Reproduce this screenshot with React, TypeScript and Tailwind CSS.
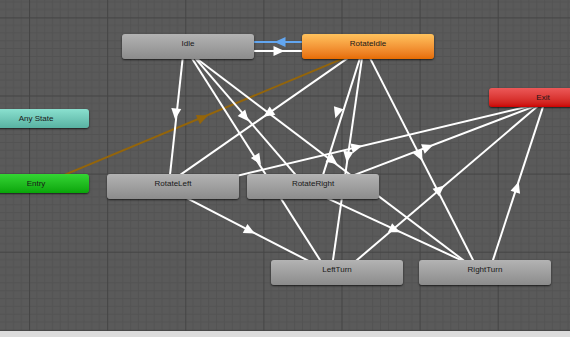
import React from "react";

type Node = {
  label: string;
  x: number;
  y: number;
  w: number;
  h: number;
  tone: string;
  text?: string;
};

// node boxes on the canvas (left / top in px)
const NODES: Node[] = [
  { label: "Idle", x: 122, y: 34, w: 132, h: 25, tone: "bg-gradient-to-b from-[#b3b3b3] to-[#8c8c8c]", text: "pb-[5px]" },
  { label: "RotateIdle", x: 302, y: 34, w: 132, h: 25, tone: "bg-gradient-to-b from-[#ffc25c] to-[#e66c00]", text: "pb-[5px]" },
  { label: "Any State", x: -17, y: 109, w: 106, h: 19, tone: "bg-gradient-to-b from-[#8ae0cf] to-[#58b2a2]" },
  { label: "Entry", x: -17, y: 174, w: 106, h: 19, tone: "bg-gradient-to-b from-[#33d633] to-[#08a508]" },
  { label: "Exit", x: 489, y: 88, w: 108, h: 19, tone: "bg-gradient-to-b from-[#ec5858] to-[#cb0000]" },
  { label: "RotateLeft", x: 107, y: 174, w: 132, h: 25, tone: "bg-gradient-to-b from-[#b3b3b3] to-[#8c8c8c]", text: "pb-[5px]" },
  { label: "RotateRight", x: 247, y: 174, w: 132, h: 25, tone: "bg-gradient-to-b from-[#b3b3b3] to-[#8c8c8c]", text: "pb-[5px]" },
  { label: "LeftTurn", x: 271, y: 260, w: 132, h: 25, tone: "bg-gradient-to-b from-[#b3b3b3] to-[#8c8c8c]", text: "pb-[5px]" },
  { label: "RightTurn", x: 419, y: 260, w: 132, h: 25, tone: "bg-gradient-to-b from-[#b3b3b3] to-[#8c8c8c]", text: "pb-[5px]" },
];

// visible segment x1, y1 -> x2, y2 (both ends get pushed under the nodes),
// arrow centred at ax, ay
type Edge = [number, number, number, number, number, number, string?];

const EDGES: Edge[] = [
  [254, 51, 302, 51, 279, 51],
  [302, 42, 254, 42, 280, 42, "#62a6f0"],
  [36, 186.8, 345, 57.7, 203, 117.5, "#94650a"],
  [182.7, 58, 170, 175, 175.7, 114],
  [191.7, 58, 320, 260, 258, 160],
  [195, 58, 295, 174, 245, 117],
  [196, 58, 463, 260, 333, 161],
  [348, 58, 180, 175, 268, 113.7],
  [360, 58, 323, 175, 337, 113],
  [362, 58, 333, 260, 347.5, 157],
  [370, 58, 473, 260, 420, 156],
  [186.7, 198, 306.7, 260, 250, 231],
  [238, 175.6, 527, 106.7, 357, 147],
  [330, 184.3, 530, 108, 428, 147],
  [326.7, 198, 463, 261, 395, 230],
  [357, 260, 537, 106.7, 440, 189],
  [493, 260, 543, 106.7, 517, 187],
];

function Arrow({ e }: { e: Edge }) {
  const [x1, y1, x2, y2, ax, ay, color] = e;
  const len = Math.hypot(x2 - x1, y2 - y1);
  const dx = (x2 - x1) / len;
  const dy = (y2 - y1) / len;
  const ext = 8;
  const L = 11;
  const W = 10;
  const tip = [ax + (dx * L) / 2, ay + (dy * L) / 2];
  const bx = ax - (dx * L) / 2;
  const by = ay - (dy * L) / 2;
  const pts = `${tip[0]},${tip[1]} ${bx - (dy * W) / 2},${by + (dx * W) / 2} ${bx + (dy * W) / 2},${by - (dx * W) / 2}`;
  const c = color ?? "#ffffff";
  return (
    <g>
      <line
        x1={x1 - dx * ext}
        y1={y1 - dy * ext}
        x2={x2 + dx * ext}
        y2={y2 + dy * ext}
        stroke={c}
        strokeWidth={2}
      />
      <polygon points={pts} fill={c} />
    </g>
  );
}

function Grid() {
  const minor = [];
  for (let i = 1; i < 10; i++) {
    minor.push(
      <g key={i}>
        <line x1={i * 7.81} y1={0} x2={i * 7.81} y2={78.1} stroke="#535353" strokeWidth={1} />
        <line x1={0} y1={i * 7.81} x2={78.1} y2={i * 7.81} stroke="#535353" strokeWidth={1} />
      </g>
    );
  }
  return (
    <>
      <defs>
        <pattern id="grid" x={29.1} y={17.4} width={78.1} height={78.1} patternUnits="userSpaceOnUse">
          {minor}
          <line x1={0.5} y1={0} x2={0.5} y2={78.1} stroke="#444444" strokeWidth={1} />
          <line x1={0} y1={0.5} x2={78.1} y2={0.5} stroke="#444444" strokeWidth={1} />
        </pattern>
      </defs>
      <rect width="570" height="331" fill="url(#grid)" />
    </>
  );
}

export default function App() {
  return (
    <div className="flex h-[337px] w-[570px] flex-col overflow-hidden bg-[#dcdcdc] font-['Liberation_Sans',Arial,sans-serif]">
      <div className="relative h-[331px] w-full overflow-hidden bg-[#5a5a5a]">
        <svg className="absolute inset-0" width="570" height="331">
          <Grid />
          {EDGES.map((e, i) => (
            <Arrow key={i} e={e} />
          ))}
        </svg>

        {NODES.map((n) => (
          <div
            key={n.label}
            className={`absolute flex items-center justify-center rounded-[3px] text-[8px] text-[#181818] shadow-[0_1px_2px_rgba(0,0,0,0.7)] ${n.tone} ${n.text ?? ""}`}
            style={{ left: n.x, top: n.y, width: n.w, height: n.h }}
          >
            {n.label}
          </div>
        ))}
      </div>
      <div className="h-[6px] w-full bg-[#dcdcdc]" />
    </div>
  );
}
